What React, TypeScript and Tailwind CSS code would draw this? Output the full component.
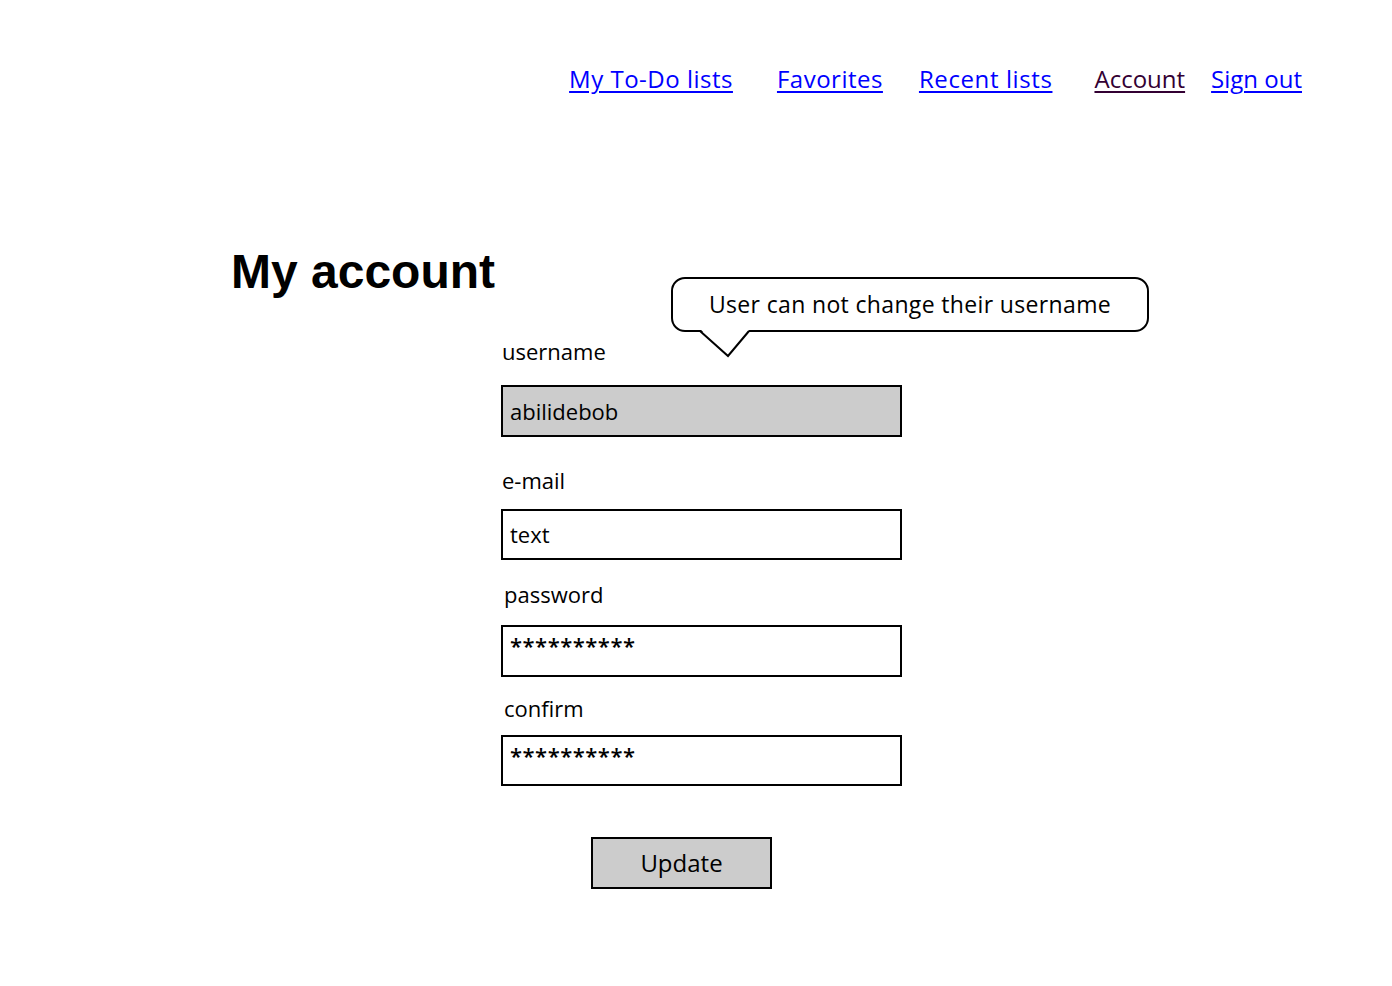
import React from 'react';

const navLinks = [
  { label: 'My To-Do lists', active: false, ml: 'ml-0 tracking-[0.5px]' },
  { label: 'Favorites', active: false, ml: 'ml-[44px] tracking-[0.5px]' },
  { label: 'Recent lists', active: false, ml: 'ml-[36px] tracking-[0.6px]' },
  { label: 'Account', active: true, ml: 'ml-[42px]' },
  { label: 'Sign out', active: false, ml: 'ml-[26px]' },
];

const Field: React.FC<{ label: string; value: string; gray?: boolean; stars?: boolean; labelClass: string; boxClass: string }> = ({
  label,
  value,
  gray,
  stars,
  labelClass,
  boxClass,
}) => (
  <>
    <label className={`block h-[30px] leading-[30px] text-[22px] text-black ${labelClass}`}>{label}</label>
    <div
      className={`border-2 border-black px-[7px] text-[22px] flex items-center ${gray ? 'bg-[#cccccc]' : 'bg-white'} ${
        stars ? 'font-semibold tracking-[0.5px]' : ''
      } ${boxClass}`}
    >
      {value}
    </div>
  </>
);

const App: React.FC = () => {
  return (
    <div className="relative min-h-screen bg-white text-black font-['Comic_Sans_MS','Open_Sans',sans-serif]">
      {/* top nav */}
      <nav className="flex justify-end pr-[90px] pt-[63px]">
        {navLinks.map((l) => (
          <a
            key={l.label}
            href="#"
            className={`${l.ml} text-[24px] leading-[32px] underline underline-offset-[3px] ${
              l.active ? 'text-[#330033]' : 'text-[#0000ff]'
            }`}
          >
            {l.label}
          </a>
        ))}
      </nav>

      <main className="pl-[231px] pt-[153px]">
        <h1 className="text-[48px] leading-[48px] font-bold font-['Liberation_Sans',Arial,sans-serif]">My account</h1>

        <form className="ml-[270px] mt-[40px] w-[401px]" onSubmit={(e) => e.preventDefault()}>
          <Field label="username" value="abilidebob" gray labelClass="ml-px" boxClass="mt-[19px] h-[52px]" />
          <Field label="e-mail" value="text" labelClass="ml-px mt-[28px]" boxClass="mt-[14px] h-[51px]" />
          <Field label="password" value="**********" stars labelClass="ml-[3px] mt-[19px]" boxClass="mt-[16px] h-[52px] items-start pt-[2px]" />
          <Field label="confirm" value="**********" stars labelClass="ml-[3px] mt-[16px]" boxClass="mt-[12px] h-[51px] items-start pt-[2px]" />

          <button
            type="submit"
            className="ml-[90px] mt-[51px] w-[181px] h-[52px] border-2 border-black bg-[#cccccc] text-[24px] text-black flex items-center justify-center"
          >
            Update
          </button>
        </form>
      </main>

      {/* callout bubble */}
      <div className="absolute left-[671px] top-[277px] w-[478px] h-[55px]">
        <div className="w-full h-full border-2 border-black rounded-[14px] bg-white flex items-center justify-center text-[23px] tracking-[0.35px]">
          User can not change their username
        </div>
        <svg className="absolute left-[27px] top-[51px]" width="54" height="30" viewBox="0 0 54 30">
          <polygon points="2,1 52,1 30,28" fill="white" />
          <polyline points="2,3 30,28 51,3" fill="none" stroke="black" strokeWidth="2" strokeLinejoin="miter" />
        </svg>
      </div>
    </div>
  );
};

export default App;
